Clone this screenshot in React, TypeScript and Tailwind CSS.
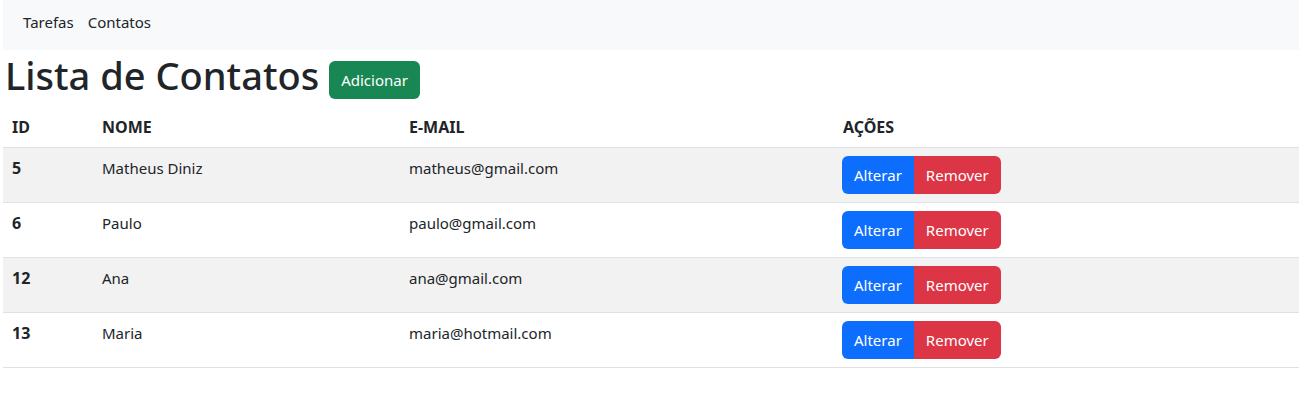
import React from "react";

const rows = [
  { id: 5, nome: "Matheus Diniz", email: "matheus@gmail.com" },
  { id: 6, nome: "Paulo", email: "paulo@gmail.com" },
  { id: 12, nome: "Ana", email: "ana@gmail.com" },
  { id: 13, nome: "Maria", email: "maria@hotmail.com" },
];

export default function App() {
  return (
    <div
      className="px-[3px] pr-[5px] bg-white text-[#212529] min-h-[403px]"
      style={{ fontFamily: '"Noto Sans", "Open Sans", sans-serif' }}
    >
      <nav className="h-[50px] bg-[#f8f9fa] flex items-start pt-[10px] pl-[20px] text-[15px] text-[#212529]">
        <a className="leading-[24px]">Tarefas</a>
        <a className="leading-[24px] ml-[14px]">Contatos</a>
      </nav>
      <h1 className="text-[38px] leading-[48px] font-medium mt-[1px] mb-[8px] flex items-start pl-[2px]">
        <span>Lista de Contatos</span>
        <button className="ml-[10px] mt-[10px] bg-[#198754] text-white text-[15px] leading-[24px] px-[12px] py-[7px] rounded-[6px] font-normal">
          Adicionar
        </button>
      </h1>
      <table className="w-full border-collapse text-[15px] leading-[24px]">
        <thead>
          <tr className="border-b border-[#dee2e6] text-[16px]">
            <th className="w-[90px] text-left font-bold pl-[9px] pr-[8px] py-[8px]">ID</th>
            <th className="w-[307px] text-left font-bold pl-[9px] pr-[8px] py-[8px]">NOME</th>
            <th className="w-[434px] text-left font-bold pl-[9px] pr-[8px] py-[8px]">E-MAIL</th>
            <th className="text-left font-bold pl-[9px] pr-[8px] py-[8px]">AÇÕES</th>
          </tr>
        </thead>
        <tbody>
          {rows.map((r, i) => (
            <tr
              key={r.id}
              className={
                "border-b border-[#dee2e6] " + (i % 2 === 0 ? "bg-[#f2f2f2]" : "bg-white")
              }
            >
              <td className="align-top font-bold text-[16px] pl-[9px] pr-[8px] pt-[8px]">{r.id}</td>
              <td className="align-top pl-[9px] pr-[8px] pt-[8px]">{r.nome}</td>
              <td className="align-top pl-[9px] pr-[8px] pt-[8px]">{r.email}</td>
              <td className="align-top pl-[8px] pr-[8px] py-[8px]">
                <div className="flex">
                  <button className="bg-[#0d6efd] text-white px-[12px] py-[7px] leading-[24px] rounded-l-[6px]">
                    Alterar
                  </button>
                  <button className="bg-[#dc3545] text-white px-[12px] py-[7px] leading-[24px] rounded-r-[6px]">
                    Remover
                  </button>
                </div>
              </td>
            </tr>
          ))}
        </tbody>
      </table>
    </div>
  );
}
